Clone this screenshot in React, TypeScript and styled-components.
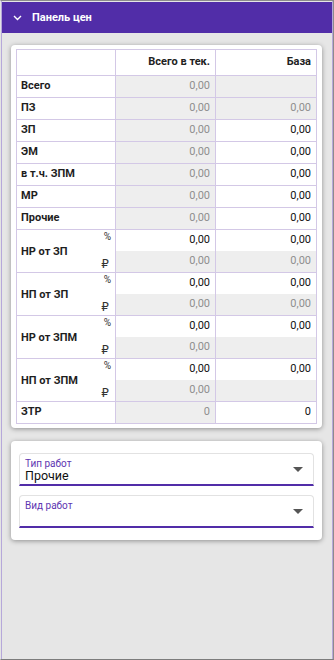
import React from "react";
import styled, { createGlobalStyle } from "styled-components";

const Global = createGlobalStyle`
  html, body { margin: 0; padding: 0; background: #e6e6e6; }
  body { font-family: Roboto, "Noto Sans", "Liberation Sans", sans-serif; }
  * { box-sizing: border-box; }
`;

const Frame = styled.div`
  width: 334px;
  height: 660px;
  border-top: 1px solid #8c8c8c;
  border-bottom: 1px solid #7c7c7c;
  border-right: 1px solid #8c8c8c;
  border-left: 1px solid #e4e4e4;
  display: flex;
`;

const Panel = styled.div`
  flex: 1;
  border-left: 1px solid #b6a8da;
  border-right: 1px solid #b6a8da;
  padding-top: 1px;
  background: #e6e6e6;
  display: flex;
  flex-direction: column;
`;

const Header = styled.div`
  height: 31px;
  background: #512da8;
  display: flex;
  align-items: center;
  gap: 10px;
  padding-left: 11px;
  color: #fff;
  font-weight: 700;
  font-size: 11px;
`;

const Content = styled.div`
  padding: 12px 10px 0 9px;
  display: flex;
  flex-direction: column;
  gap: 13px;
`;

const Card = styled.div<{ $pad: string }>`
  background: #fff;
  border-radius: 4px;
  padding: ${(p) => p.$pad};
  box-shadow: 0 1px 5px rgba(0, 0, 0, 0.38);
`;

const Grid = styled.div`
  display: grid;
  grid-template-columns: 98px 99px 100px;
  grid-template-rows: 25px repeat(7, 21px) repeat(4, 42px) 21px;
  gap: 1px;
  padding: 1px;
  background: #d3c8e6;
  width: 301px;
`;

const Cell = styled.div<{ $off?: boolean; $head?: boolean }>`
  background: ${(p) => (p.$off ? "#eeeeee" : "#fff")};
  color: ${(p) => (p.$head ? "#222" : p.$off ? "#8e8e8e" : "#111")};
  font-size: 11px;
  font-weight: ${(p) => (p.$head ? 700 : 400)};
  display: flex;
  align-items: center;
  justify-content: flex-end;
  padding: 0 5px 2px 0;
  height: 100%;
`;

const Stack = styled.div`
  display: grid;
  grid-template-rows: 21px 21px;
`;

const Label = styled.div`
  background: #fff;
  color: #1e1e1e;
  font-size: 11px;
  font-weight: 700;
  display: flex;
  align-items: center;
  padding: 0 0 2px 4px;
`;

const DoubleLabel = styled.div`
  background: #fff;
  display: flex;
  align-items: stretch;
  justify-content: space-between;
  padding-left: 4px;
`;

const DoubleText = styled.span`
  color: #1e1e1e;
  font-size: 11px;
  font-weight: 700;
  align-self: center;
`;

const Units = styled.div`
  display: flex;
  flex-direction: column;
  justify-content: space-between;
  align-items: flex-end;
  padding: 1px 4px 2px 0;
  color: #333;
  font-size: 10px;
  line-height: 12px;
`;

const Rub = styled.span`
  font-size: 12px;
  font-family: "DejaVu Sans", Roboto, sans-serif;
  margin-right: 2px;
`;

const Field = styled.div`
  height: 33px;
  border: 1px solid #e2e2e2;
  border-bottom: 2px solid #512da8;
  border-radius: 4px 4px 0 0;
  display: flex;
  align-items: center;
  justify-content: space-between;
  padding: 0 10px 0 5px;
`;

const FieldText = styled.div`
  display: flex;
  flex-direction: column;
  align-self: flex-start;
  padding-top: 5px;
`;

const FieldLabel = styled.span`
  color: #5e35b1;
  font-size: 10px;
  line-height: 10px;
`;

const FieldValue = styled.span`
  color: #111;
  font-size: 12.5px;
  line-height: 13px;
`;

const Fields = styled.div`
  display: flex;
  flex-direction: column;
  gap: 9px;
`;

type V = { t: string; off: boolean };
const v = (t: string, off: boolean): V => ({ t, off });

const singles: [string, V, V][] = [
  ["Всего", v("0,00", true), v("", true)],
  ["ПЗ", v("0,00", true), v("0,00", true)],
  ["ЗП", v("0,00", true), v("0,00", false)],
  ["ЭМ", v("0,00", true), v("0,00", false)],
  ["в т.ч. ЗПМ", v("0,00", true), v("0,00", false)],
  ["МР", v("0,00", true), v("0,00", false)],
  ["Прочие", v("0,00", true), v("0,00", false)],
];

const doubles: [string, V, V, V, V][] = [
  ["НР от ЗП", v("0,00", false), v("0,00", true), v("0,00", false), v("0,00", true)],
  ["НП от ЗП", v("0,00", false), v("0,00", true), v("0,00", false), v("0,00", true)],
  ["НР от ЗПМ", v("0,00", false), v("0,00", true), v("0,00", false), v("", true)],
  ["НП от ЗПМ", v("0,00", false), v("0,00", true), v("0,00", false), v("", true)],
];

const Chevron = () => (
  <svg width="9" height="6" viewBox="0 0 9 6">
    <polyline points="1,1 4.5,4.5 8,1" fill="none" stroke="#fff" strokeWidth="1.4" />
  </svg>
);

const Caret = () => (
  <svg width="10" height="5" viewBox="0 0 10 5">
    <polygon points="0,0 10,0 5,5" fill="#555" />
  </svg>
);

export default function App() {
  return (
    <>
      <Global />
      <Frame>
        <Panel>
          <Header>
            <Chevron />
            <span>Панель цен</span>
          </Header>
          <Content>
            <Card $pad="4px 5px 4px 5px">
              <Grid>
                <Cell />
                <Cell $head>Всего в тек.</Cell>
                <Cell $head>База</Cell>
                {singles.map(([l, a, b]) => (
                  <React.Fragment key={l}>
                    <Label>{l}</Label>
                    <Cell $off={a.off}>{a.t}</Cell>
                    <Cell $off={b.off}>{b.t}</Cell>
                  </React.Fragment>
                ))}
                {doubles.map(([l, a1, a2, b1, b2]) => (
                  <React.Fragment key={l}>
                    <DoubleLabel>
                      <DoubleText>{l}</DoubleText>
                      <Units>
                        <span>%</span>
                        <Rub>₽</Rub>
                      </Units>
                    </DoubleLabel>
                    <Stack>
                      <Cell $off={a1.off}>{a1.t}</Cell>
                      <Cell $off={a2.off}>{a2.t}</Cell>
                    </Stack>
                    <Stack>
                      <Cell $off={b1.off}>{b1.t}</Cell>
                      <Cell $off={b2.off}>{b2.t}</Cell>
                    </Stack>
                  </React.Fragment>
                ))}
                <Label>ЗТР</Label>
                <Cell $off>0</Cell>
                <Cell>0</Cell>
              </Grid>
            </Card>
            <Card $pad="12px 8px 12px 8px">
              <Fields>
                <Field>
                  <FieldText>
                    <FieldLabel>Тип работ</FieldLabel>
                    <FieldValue>Прочие</FieldValue>
                  </FieldText>
                  <Caret />
                </Field>
                <Field>
                  <FieldText>
                    <FieldLabel>Вид работ</FieldLabel>
                  </FieldText>
                  <Caret />
                </Field>
              </Fields>
            </Card>
          </Content>
        </Panel>
      </Frame>
    </>
  );
}
